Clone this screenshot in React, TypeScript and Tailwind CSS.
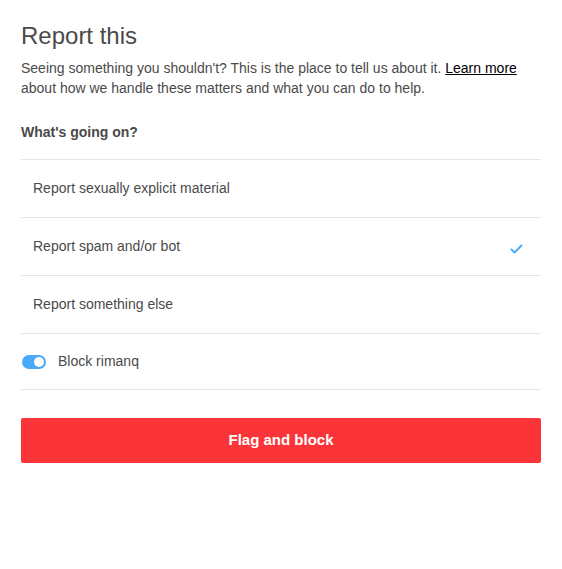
import { useState } from "react";

const options = [
  "Report sexually explicit material",
  "Report spam and/or bot",
  "Report something else",
];

export default function App() {
  const [selected, setSelected] = useState(1);
  const [block, setBlock] = useState(true);

  return (
    <div className="min-h-[569px] bg-white px-[21px] pt-[22px] font-['Liberation_Sans',Arial,sans-serif] text-[#4a4a4a]">
      <h1 className="text-[24px] leading-[28px]">Report this</h1>
      <p className="mt-[8px] text-[14px] leading-[20px]">
        Seeing something you shouldn't? This is the place to tell us about it.{" "}
        <a href="#" className="text-black underline">
          Learn more
        </a>{" "}
        about how we handle these matters and what you can do to help.
      </p>
      <h2 className="mt-[24px] text-[14px] font-bold leading-[20px]">
        What's going on?
      </h2>

      <div className="mt-[17px] border-t border-[#e6e6e6]">
        {options.map((label, i) => (
          <button
            key={label}
            type="button"
            onClick={() => setSelected(i)}
            className="flex h-[58px] w-full items-center justify-between border-b border-[#e6e6e6] px-[12px] text-left text-[14px]"
          >
            <span>{label}</span>
            {selected === i && (
              <svg
                width="13"
                height="10"
                viewBox="0 0 13 10"
                fill="none"
                className="mr-[6px] mt-[5px]"
              >
                <path
                  d="M1.5 5.5 L4.5 8.5 L11.5 1.5"
                  stroke="#4aa8f5"
                  strokeWidth="1.8"
                  strokeLinecap="round"
                  strokeLinejoin="round"
                />
              </svg>
            )}
          </button>
        ))}

        <div className="flex h-[56px] items-center gap-[12px] border-b border-[#e6e6e6] pl-[1px]">
          <button
            type="button"
            onClick={() => setBlock(!block)}
            className={`flex h-[14px] w-[24px] items-center rounded-full px-[2px] ${
              block ? "justify-end bg-[#48a9f8]" : "justify-start bg-[#cfcfcf]"
            }`}
          >
            <span className="h-[10px] w-[10px] rounded-full bg-white" />
          </button>
          <span className="text-[14px]">Block rimanq</span>
        </div>
      </div>

      <button
        type="button"
        className="mt-[28px] h-[45px] w-full rounded-[2px] bg-[#fb3439] text-[15px] font-bold text-white"
      >
        Flag and block
      </button>
    </div>
  );
}
